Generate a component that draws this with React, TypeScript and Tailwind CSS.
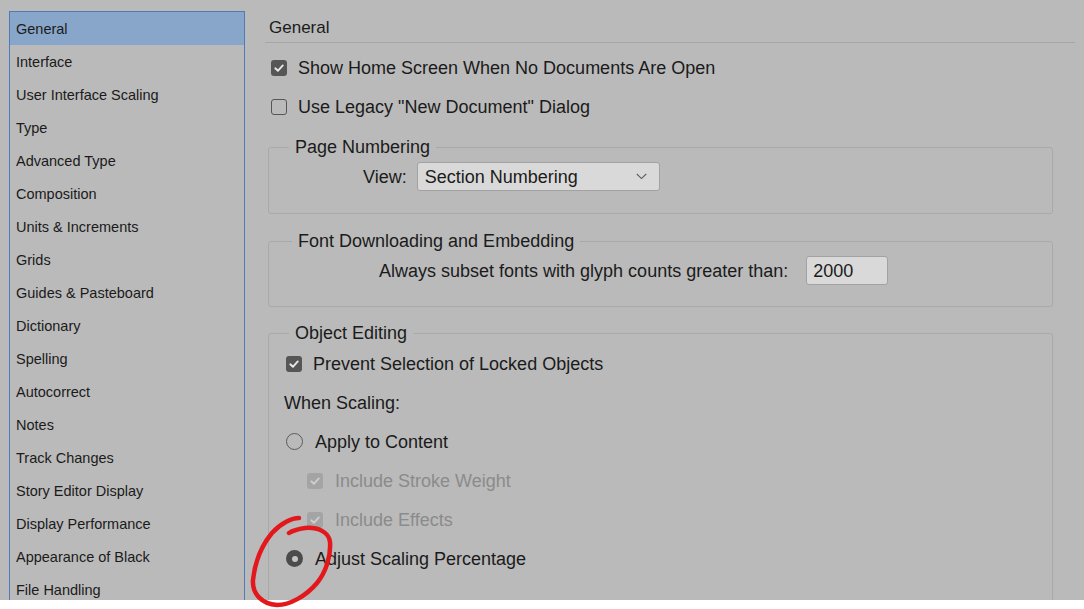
import React from 'react';

const sections = [
  'General',
  'Interface',
  'User Interface Scaling',
  'Type',
  'Advanced Type',
  'Composition',
  'Units & Increments',
  'Grids',
  'Guides & Pasteboard',
  'Dictionary',
  'Spelling',
  'Autocorrect',
  'Notes',
  'Track Changes',
  'Story Editor Display',
  'Display Performance',
  'Appearance of Black',
  'File Handling',
];

function CheckBox({ checked, disabled }: { checked: boolean; disabled?: boolean }) {
  if (!checked) {
    return <span className="block w-[16px] h-[16px] shrink-0 rounded-[3px] border-[1.5px] border-[#565656]" />;
  }
  return (
    <span
      className={
        'flex items-center justify-center w-[16px] h-[16px] shrink-0 rounded-[3px] ' +
        (disabled ? 'bg-[#a4a4a4]' : 'bg-[#565656]')
      }
    >
      <svg width="12" height="12" viewBox="0 0 12 12" fill="none">
        <path
          d="M2.3 6.3 L4.9 8.8 L9.8 3.4"
          stroke={disabled ? '#cdcdcd' : '#e6e6e6'}
          strokeWidth="1.9"
          strokeLinecap="round"
          strokeLinejoin="round"
        />
      </svg>
    </span>
  );
}

function Radio({ selected }: { selected: boolean }) {
  if (!selected) {
    return <span className="block w-[17px] h-[17px] shrink-0 rounded-full border-[1.5px] border-[#5a5a5a]" />;
  }
  return (
    <span className="flex items-center justify-center w-[17px] h-[17px] shrink-0 rounded-full bg-[#4b4b4b]">
      <span className="block w-[6px] h-[6px] rounded-full bg-[#c4c4c4]" />
    </span>
  );
}

export default function App() {
  return (
    <div
      className="relative w-[1084px] h-[609px] bg-[#bababa] text-[#1b1b1b] overflow-hidden"
      style={{ fontFamily: '"Liberation Sans", Arial, sans-serif' }}
    >
      <div className="flex h-[600px] overflow-hidden">
        {/* sidebar list */}
        <div className="ml-[9px] mt-[11px] w-[236px] border border-b-0 border-[#4f7bb8] shrink-0">
          {sections.map((s, i) => (
            <div
              key={s}
              className={
                'flex items-center h-[33px] pt-[2px] px-[6px] text-[14.5px] leading-none ' +
                (i === 0 ? 'bg-[#88a6c9]' : '')
              }
            >
              {s}
            </div>
          ))}
        </div>

        {/* settings panel */}
        <div className="ml-[20px] w-[810px] flex flex-col text-[18px] leading-[22px]">
          <div className="pt-[17px] pb-[3px] pl-[4px] border-b border-[#a6a6a6] text-[17px]">General</div>

          <div className="mt-[5px] pl-[6px]">
            <div className="flex items-center h-[39px] gap-[11px]">
              <CheckBox checked />
              <span>Show Home Screen When No Documents Are Open</span>
            </div>
            <div className="flex items-center h-[39px] gap-[11px]">
              <CheckBox checked={false} />
              <span>Use Legacy "New Document" Dialog</span>
            </div>
          </div>

          <fieldset className="mt-[10px] ml-[3px] w-[785px] border border-[#a9a9a9] rounded-[3px] pb-[22px]">
            <legend className="ml-[20px] px-[6px]">Page Numbering</legend>
            <div className="mt-[4px] pl-[94px] flex items-center gap-[10px]">
              <span>View:</span>
              <div className="flex items-center justify-between w-[243px] h-[29px] pl-[7px] pr-[12px] bg-[#d9d9d9] border border-[#a2a2a2] rounded-[3px]">
                <span>Section Numbering</span>
                <svg width="11" height="7" viewBox="0 0 11 7" fill="none">
                  <path d="M0.8 1 L5.5 5.6 L10.2 1" stroke="#5c5c5c" strokeWidth="1.1" />
                </svg>
              </div>
            </div>
          </fieldset>

          <fieldset className="mt-[16px] ml-[3px] w-[785px] border border-[#a9a9a9] rounded-[3px] pb-[21px]">
            <legend className="ml-[23px] px-[6px]">Font Downloading and Embedding</legend>
            <div className="mt-[4px] pl-[110px] flex items-center gap-[18px]">
              <span>Always subset fonts with glyph counts greater than:</span>
              <div className="flex items-center w-[82px] h-[29px] pl-[6px] bg-[#d9d9d9] border border-[#a2a2a2] rounded-[3px]">
                2000
              </div>
            </div>
          </fieldset>

          <fieldset className="mt-[15px] ml-[3px] w-[785px] h-[400px] shrink-0 border border-[#a9a9a9] rounded-[3px]">
            <legend className="ml-[20px] px-[6px]">Object Editing</legend>
            <div className="flex items-center h-[39px] pl-[17px] gap-[11px]">
              <CheckBox checked />
              <span>Prevent Selection of Locked Objects</span>
            </div>
            <div className="flex items-center h-[39px] pl-[15px]">When Scaling:</div>
            <div className="flex items-center h-[39px] pl-[17px] gap-[12px]">
              <Radio selected={false} />
              <span>Apply to Content</span>
            </div>
            <div className="flex items-center h-[39px] pl-[38px] gap-[12px] text-[#8b8b8b]">
              <CheckBox checked disabled />
              <span>Include Stroke Weight</span>
            </div>
            <div className="flex items-center h-[39px] pl-[38px] gap-[12px] text-[#8b8b8b]">
              <CheckBox checked disabled />
              <span>Include Effects</span>
            </div>
            <div className="flex items-center h-[39px] pl-[17px] gap-[12px]">
              <Radio selected />
              <span>Adjust Scaling Percentage</span>
            </div>
          </fieldset>
        </div>
      </div>
      <div className="h-[9px] bg-white" />

      {/* red pen annotation */}
      <svg
        className="absolute inset-0 pointer-events-none"
        width="1084"
        height="609"
        viewBox="0 0 1084 609"
        fill="none"
      >
        <path
          d="M299 518 C292 518 281 523 272 533 C262 545 255 562 253 580 C252 594 262 604 277 605 C290 605 306 596 317 583 C326 572 331 556 330 542 C329 532 318 527 305 528 C298 529 292 531 289 533"
          stroke="#e2181d"
          strokeWidth="4.5"
          strokeLinecap="round"
          strokeLinejoin="round"
        />
      </svg>
    </div>
  );
}
